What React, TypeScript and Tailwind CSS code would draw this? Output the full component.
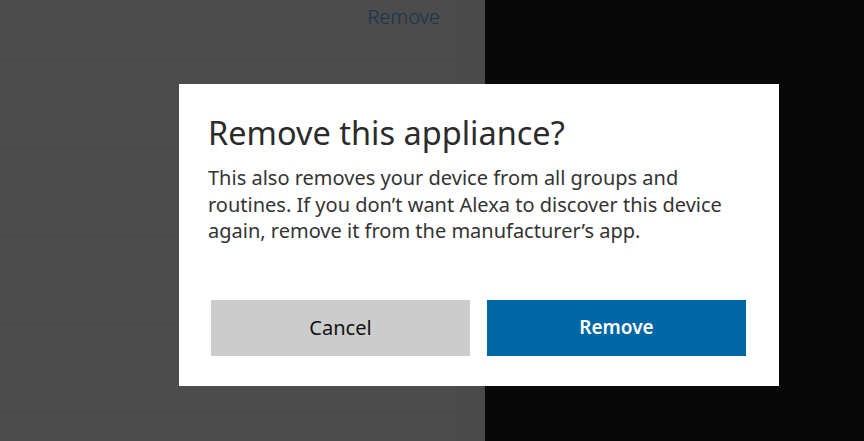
import React from 'react';

const rows = [0, 1, 2, 3, 4];

export default function App() {
  return (
    <div
      className="relative flex h-[441px] w-[864px] overflow-hidden bg-[#080808]"
      style={{ fontFamily: '"Noto Sans", "Open Sans", Arial, sans-serif' }}
    >
      {/* page behind the overlay */}
      <div className="flex w-[456px] flex-col bg-[#4c4c4c]">
        <div className="flex h-[60px] shrink-0 justify-end pr-[16px] pt-[3px]">
          <span className="text-[20px] font-light leading-[28px] text-[#18344d]">Remove</span>
        </div>
        {rows.map((r) => (
          <div key={r} className="h-[88px] shrink-0 border-t border-[#454545]" />
        ))}
      </div>
      <div className="w-[29px] bg-[#494949]" />
      <div className="flex-1 bg-[#080808]" />

      {/* dialog */}
      <div className="absolute left-[179px] top-[84px] flex w-[600px] flex-col bg-white pb-[30px]">
        <div className="pl-[29px] pt-[29px]">
          <h2 className="text-[32.5px] font-normal leading-[40px] text-[#2b2b2b]">Remove this appliance?</h2>
          <p className="mt-[12px] w-[532px] text-[20px] leading-[26.5px] text-[#333333]">
            This also removes your device from all groups and routines. If you don’t want Alexa to discover this device
            again, remove it from the manufacturer’s app.
          </p>
        </div>
        <div className="mt-[55px] flex gap-[17px] pl-[32px] pr-[33px]">
          <button className="h-[56px] flex-1 bg-[#cccccc] text-[20px] text-[#111111]">Cancel</button>
          <button className="h-[56px] flex-1 bg-[#0067a6] text-[19px] font-semibold text-white">Remove</button>
        </div>
      </div>
    </div>
  );
}
